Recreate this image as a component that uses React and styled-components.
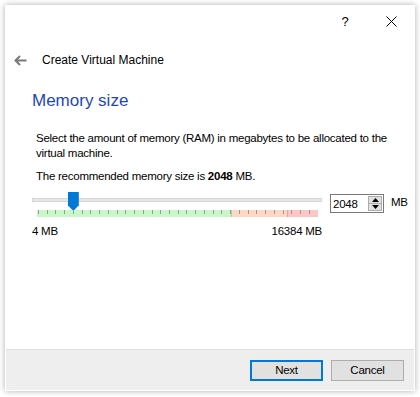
import React from "react";
import styled, { createGlobalStyle } from "styled-components";

const GlobalStyle = createGlobalStyle`
  html, body {
    margin: 0;
    padding: 0;
    background: #ffffff;
  }
  body {
    font-family: "Segoe UI", "Liberation Sans", Arial, sans-serif;
    font-size: 11.5px;
    letter-spacing: -0.25px;
    color: #000;
  }
`;

const MIN = 4;
const MAX = 16384;
const VALUE = 2048;
const TICKS = 32;

const App = () => {
  const fraction = (VALUE - MIN) / (MAX - MIN);
  return (
    <>
      <GlobalStyle />
      <Window>
        <TitleBar>
          <CaptionButton aria-label="Help">?</CaptionButton>
          <CaptionButton aria-label="Close">
            <svg width="11" height="11" viewBox="0 0 11 11">
              <path d="M0.5 0.5 L10.5 10.5 M10.5 0.5 L0.5 10.5" stroke="#000" strokeWidth="1" />
            </svg>
          </CaptionButton>
        </TitleBar>

        <Header>
          <BackArrow>
            <svg width="13" height="11" viewBox="0 0 13 11">
              <path d="M12.5 5.5 H1.5 M6 1 L1.5 5.5 L6 10" stroke="#7a7a7a" strokeWidth="2" fill="none" />
            </svg>
          </BackArrow>
          <HeaderTitle>Create Virtual Machine</HeaderTitle>
        </Header>

        <Content>
          <PageTitle>Memory size</PageTitle>
          <Description>
            Select the amount of memory (RAM) in megabytes to be allocated to the
            <br />
            virtual machine.
          </Description>
          <Description>
            The recommended memory size is <b>2048</b> MB.
          </Description>

          <SliderRow>
            <SliderBlock>
              <Track>
                <Thumb style={{ left: `${fraction * 279}px` }} />
              </Track>
              <Scale>
                <Zone $color="#c8f8c8" $width={195} $edge="#9ed69e" />
                <Zone $color="#ffd7c2" $width={56} $edge="#f0a0a0" />
                <Zone $color="#ffc4c4" $width={30} />
                <TickLayer>
                  {Array.from({ length: TICKS }).map((_, i) => (
                    <Tick key={i} />
                  ))}
                </TickLayer>
              </Scale>
              <Limits>
                <span>4 MB</span>
                <span>16384 MB</span>
              </Limits>
            </SliderBlock>
            <SpinBox>
              <SpinValue>2048</SpinValue>
              <SpinButtons>
                <SpinButton>
                  <svg width="7" height="4" viewBox="0 0 7 4">
                    <path d="M0 4 L3.5 0 L7 4 Z" fill="#000" />
                  </svg>
                </SpinButton>
                <SpinButton>
                  <svg width="7" height="4" viewBox="0 0 7 4">
                    <path d="M0 0 L3.5 4 L7 0 Z" fill="#000" />
                  </svg>
                </SpinButton>
              </SpinButtons>
            </SpinBox>
            <Unit>MB</Unit>
          </SliderRow>
        </Content>

        <Footer>
          <Button $primary>Next</Button>
          <Button>Cancel</Button>
        </Footer>
      </Window>
    </>
  );
};

export default App;

const Window = styled.div`
  margin: 5px;
  width: 410px;
  height: 386px;
  box-sizing: border-box;
  background: #ffffff;
  border: 1px solid #ffffff;
  box-shadow: 0 0 6px rgba(0, 0, 0, 0.32);
  display: flex;
  flex-direction: column;
`;

const TitleBar = styled.div`
  height: 30px;
  display: flex;
  justify-content: flex-end;
`;

const CaptionButton = styled.div`
  width: 46px;
  height: 30px;
  display: flex;
  align-items: center;
  justify-content: center;
  font-size: 13px;
`;

const Header = styled.div`
  height: 48px;
  display: flex;
  align-items: center;
  padding-left: 8px;
`;

const BackArrow = styled.div`
  width: 28px;
  display: flex;
  align-items: center;
`;

const HeaderTitle = styled.div`
  font-size: 12px;
  letter-spacing: 0;
`;

const Content = styled.div`
  flex: 1;
  padding: 6px 0 0 26px;
`;

const PageTitle = styled.div`
  font-size: 17px;
  line-height: 22px;
  letter-spacing: 0;
  color: #1f46bd;
  margin-bottom: 19px;
`;

const Description = styled.div`
  line-height: 15px;
  padding-left: 4px;
  margin-bottom: 8px;
  white-space: nowrap;
`;

const SliderRow = styled.div`
  display: flex;
  align-items: flex-start;
  margin-top: 6px;
`;

const SliderBlock = styled.div`
  width: 290px;
  display: flex;
  flex-direction: column;
`;

const Track = styled.div`
  position: relative;
  margin-top: 6px;
  height: 4px;
  background: #e7e7e7;
  border: 1px solid #d6d6d6;
  box-sizing: border-box;
`;

const Thumb = styled.div`
  position: absolute;
  top: -7px;
  width: 11px;
  height: 19px;
  background: #0078d7;
  clip-path: polygon(0 0, 100% 0, 100% 70%, 50% 100%, 0 70%);
`;

const Scale = styled.div`
  position: relative;
  margin: 8px 0 0 5px;
  width: 281px;
  height: 7px;
  display: flex;
`;

const Zone = styled.div`
  width: ${(p) => p.$width}px;
  background: ${(p) => p.$color};
  border-right: ${(p) => (p.$edge ? `1px solid ${p.$edge}` : "none")};
  box-sizing: border-box;
`;

const TickLayer = styled.div`
  position: absolute;
  left: 0;
  top: 0;
  width: 273px;
  display: flex;
  justify-content: space-between;
  padding-left: 1px;
  box-sizing: border-box;
`;

const Tick = styled.div`
  width: 1px;
  height: 4px;
  background: #9a9a9a;
`;

const Limits = styled.div`
  display: flex;
  justify-content: space-between;
  margin-top: 8px;
`;

const SpinBox = styled.div`
  margin: 2px 0 0 8px;
  width: 54px;
  height: 19px;
  box-sizing: border-box;
  border: 1px solid #7a7a7a;
  display: flex;
  align-items: center;
  justify-content: space-between;
`;

const SpinValue = styled.span`
  padding-left: 2px;
`;

const SpinButtons = styled.div`
  width: 14px;
  height: 15px;
  margin-right: 1px;
  display: flex;
  flex-direction: column;
  border: 1px solid #adadad;
  box-sizing: border-box;
  background: #e1e1e1;
`;

const SpinButton = styled.div`
  flex: 1;
  display: flex;
  align-items: center;
  justify-content: center;
  &:first-child {
    border-bottom: 1px solid #adadad;
  }
`;

const Unit = styled.span`
  margin: 4px 0 0 7px;
`;

const Footer = styled.div`
  height: 40px;
  background: #eeeeee;
  border-top: 1px solid #dfdfdf;
  display: flex;
  align-items: center;
  justify-content: flex-end;
  gap: 8px;
  padding-right: 10px;
`;

const Button = styled.div`
  width: 73px;
  height: 21px;
  box-sizing: border-box;
  background: #e1e1e1;
  border: ${(p) => (p.$primary ? "2px solid #0078d7" : "1px solid #adadad")};
  display: flex;
  align-items: center;
  justify-content: center;
`;
